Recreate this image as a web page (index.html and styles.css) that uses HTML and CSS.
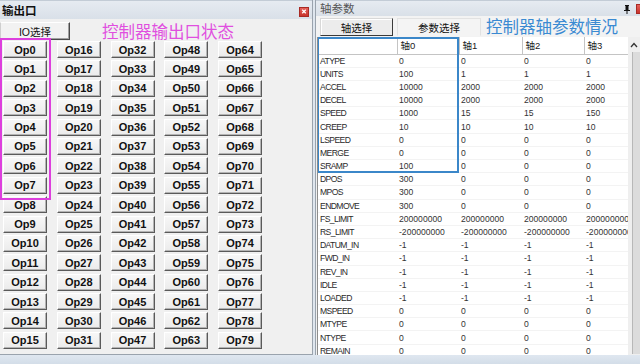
FILE: index.html
```html
<!DOCTYPE html>
<html>
<head>
<meta charset="utf-8">
<link rel="stylesheet" href="styles.css">
</head>
<body>
<div class="app">
  <div class="main">
    <section class="left-panel">
      <div class="title-bar">
        <span class="title-text bold">输出口</span>
        <span class="close-box"><svg width="9" height="9" viewBox="0 0 9 9"><path d="M2.5 2.5 L6.5 6.5 M6.5 2.5 L2.5 6.5" stroke="#fff" stroke-width="1.4"/></svg></span>
      </div>
      <div class="left-body">
        <div class="io-row">
          <button class="io-btn">IO选择</button>
          <span class="pink-note">控制器输出口状态</span>
        </div>
        <div class="op-grid">
          <button class="op">Op0</button><button class="op">Op16</button><button class="op">Op32</button><button class="op">Op48</button><button class="op">Op64</button>
          <button class="op">Op1</button><button class="op">Op17</button><button class="op">Op33</button><button class="op">Op49</button><button class="op">Op65</button>
          <button class="op">Op2</button><button class="op">Op18</button><button class="op">Op34</button><button class="op">Op50</button><button class="op">Op66</button>
          <button class="op">Op3</button><button class="op">Op19</button><button class="op">Op35</button><button class="op">Op51</button><button class="op">Op67</button>
          <button class="op">Op4</button><button class="op">Op20</button><button class="op">Op36</button><button class="op">Op52</button><button class="op">Op68</button>
          <button class="op">Op5</button><button class="op">Op21</button><button class="op">Op37</button><button class="op">Op53</button><button class="op">Op69</button>
          <button class="op">Op6</button><button class="op">Op22</button><button class="op">Op38</button><button class="op">Op54</button><button class="op">Op70</button>
          <button class="op">Op7</button><button class="op">Op23</button><button class="op">Op39</button><button class="op">Op55</button><button class="op">Op71</button>
          <button class="op">Op8</button><button class="op">Op24</button><button class="op">Op40</button><button class="op">Op56</button><button class="op">Op72</button>
          <button class="op">Op9</button><button class="op">Op25</button><button class="op">Op41</button><button class="op">Op57</button><button class="op">Op73</button>
          <button class="op">Op10</button><button class="op">Op26</button><button class="op">Op42</button><button class="op">Op58</button><button class="op">Op74</button>
          <button class="op">Op11</button><button class="op">Op27</button><button class="op">Op43</button><button class="op">Op59</button><button class="op">Op75</button>
          <button class="op">Op12</button><button class="op">Op28</button><button class="op">Op44</button><button class="op">Op60</button><button class="op">Op76</button>
          <button class="op">Op13</button><button class="op">Op29</button><button class="op">Op45</button><button class="op">Op61</button><button class="op">Op77</button>
          <button class="op">Op14</button><button class="op">Op30</button><button class="op">Op46</button><button class="op">Op62</button><button class="op">Op78</button>
          <button class="op">Op15</button><button class="op">Op31</button><button class="op">Op47</button><button class="op">Op63</button><button class="op">Op79</button>
        </div>
        <div class="mark-pink"></div>
      </div>
    </section>
    <div class="splitter"></div>
    <section class="right-panel">
      <div class="title-bar right-title">
        <span class="title-text light">轴参数</span>
        <span class="pin"><svg width="6" height="9" viewBox="0 0 6 9"><path d="M1 0 H5 V1 H4.5 V5 H6 V6 H3.5 V9 H2.5 V6 H0 V5 H1.5 V1 H1 Z" fill="#111"/></svg></span>
        <span class="close-box close-cut"></span>
      </div>
      <div class="toolbar">
        <button class="tb-btn active">轴选择</button>
        <button class="tb-btn flat">参数选择</button>
        <span class="blue-note">控制器轴参数情况</span>
      </div>
      <div class="grid-area">
        <div class="table-wrap">
          <table class="params">
            <colgroup><col class="c-name"><col class="c-v0"><col class="c-v1"><col class="c-v2"><col class="c-v3"></colgroup>
            <thead>
              <tr><th></th><th>轴0</th><th>轴1</th><th>轴2</th><th>轴3</th></tr>
            </thead>
            <tbody>
              <tr><td>ATYPE</td><td>0</td><td>0</td><td>0</td><td>0</td></tr>
              <tr><td>UNITS</td><td>100</td><td>1</td><td>1</td><td>1</td></tr>
              <tr><td>ACCEL</td><td>10000</td><td>2000</td><td>2000</td><td>2000</td></tr>
              <tr><td>DECEL</td><td>10000</td><td>2000</td><td>2000</td><td>2000</td></tr>
              <tr><td>SPEED</td><td>1000</td><td>15</td><td>15</td><td>150</td></tr>
              <tr><td>CREEP</td><td>10</td><td>10</td><td>10</td><td>10</td></tr>
              <tr><td>LSPEED</td><td>0</td><td>0</td><td>0</td><td>0</td></tr>
              <tr><td>MERGE</td><td>0</td><td>0</td><td>0</td><td>0</td></tr>
              <tr><td>SRAMP</td><td>100</td><td>0</td><td>0</td><td>0</td></tr>
              <tr><td>DPOS</td><td>300</td><td>0</td><td>0</td><td>0</td></tr>
              <tr><td>MPOS</td><td>300</td><td>0</td><td>0</td><td>0</td></tr>
              <tr><td>ENDMOVE</td><td>300</td><td>0</td><td>0</td><td>0</td></tr>
              <tr><td>FS_LIMIT</td><td>200000000</td><td>200000000</td><td>200000000</td><td>200000000</td></tr>
              <tr><td>RS_LIMIT</td><td>-200000000</td><td>-200000000</td><td>-200000000</td><td>-200000000</td></tr>
              <tr><td>DATUM_IN</td><td>-1</td><td>-1</td><td>-1</td><td>-1</td></tr>
              <tr><td>FWD_IN</td><td>-1</td><td>-1</td><td>-1</td><td>-1</td></tr>
              <tr><td>REV_IN</td><td>-1</td><td>-1</td><td>-1</td><td>-1</td></tr>
              <tr><td>IDLE</td><td>-1</td><td>-1</td><td>-1</td><td>-1</td></tr>
              <tr><td>LOADED</td><td>-1</td><td>-1</td><td>-1</td><td>-1</td></tr>
              <tr><td>MSPEED</td><td>0</td><td>0</td><td>0</td><td>0</td></tr>
              <tr><td>MTYPE</td><td>0</td><td>0</td><td>0</td><td>0</td></tr>
              <tr><td>NTYPE</td><td>0</td><td>0</td><td>0</td><td>0</td></tr>
              <tr><td>REMAIN</td><td>0</td><td>0</td><td>0</td><td>0</td></tr>
            </tbody>
          </table>
          <div class="mark-blue"></div>
        </div>
        <div class="scrollbar">
          <span class="sb-arrow"><svg width="8" height="6" viewBox="0 0 8 6"><path d="M1 5 L4 1.5 L7 5" fill="none" stroke="#333" stroke-width="1.3"/></svg></span>
          <div class="sb-thumb"></div>
        </div>
      </div>
    </section>
  </div>
  <div class="status-strip"></div>
</div>
</body>
</html>
```
FILE: styles.css
```css
* { box-sizing: border-box; }
html, body { margin: 0; padding: 0; }
body {
  width: 640px;
  height: 364px;
  overflow: hidden;
  background: #dbe3ec;
  font-family: "Liberation Sans", "Noto Sans CJK SC", sans-serif;
}
.app { display: flex; flex-direction: column; height: 364px; }
.main { display: flex; height: 355px; }

/* ---------- left panel ---------- */
.left-panel {
  width: 313px;
  display: flex;
  flex-direction: column;
  background: #f0f0f0;
  border-right: 1px solid #9aa3ad;
  border-bottom: 1px solid #9aa3ad;
}
.title-bar {
  height: 19px;
  display: flex;
  align-items: center;
  background: linear-gradient(#e6ebf1, #d9e0e8);
  border-top: 1px solid #c3ccd6;
  padding-left: 2px;
  flex: none;
}
.title-text { font-size: 11.5px; font-family: "Noto Sans CJK SC", sans-serif; line-height: 1; }
.title-text.bold { font-weight: bold; color: #111; margin-top: 2px; }
.title-text.light { color: #555; }
.close-box {
  margin-left: auto;
  margin-right: 3px;
  width: 10px;
  height: 10px;
  background: linear-gradient(#e4605a, #c8332c);
  border: 1px solid #a82a24;
  display: flex;
  align-items: center;
  justify-content: center;
  margin-top: 3px;
}
.close-box svg { display: block; }
.left-body { position: relative; flex: 1; }
.io-row { display: flex; align-items: center; height: 22px; }
.io-btn {
  margin-top: 2px;
  width: 70px;
  height: 18px;
  padding: 0;
  font-family: "Liberation Sans", "Noto Sans CJK SC", sans-serif;
  font-size: 10.5px;
  color: #111;
  background: #f2f2f2;
  border: 1px solid;
  border-color: #fff #4a4a4a #4a4a4a #cfcfcf;
  box-shadow: inset -1px -1px 0 #a0a0a0;
}
.pink-note {
  margin-left: 32px;
  font-family: "Noto Sans CJK SC", sans-serif;
  font-size: 16.5px;
  color: #e04fdf;
  line-height: 1;
  margin-top: 2px;
}
.op-grid {
  display: grid;
  grid-template-columns: repeat(5, 44px);
  grid-auto-rows: 17px;
  column-gap: 9.75px;
  row-gap: 2.4px;
  padding: 0 0 0 3px;
  margin-top: 0;
}
.op {
  padding: 0;
  font-family: "Liberation Sans", sans-serif;
  font-weight: bold;
  font-size: 11px;
  color: #111;
  background: linear-gradient(#f7f7f7, #ebebeb);
  border: 1px solid;
  border-color: #ffffff #5a5a5a #5a5a5a #ffffff;
  box-shadow: inset -1px -1px 0 #b4b4b4;
}
.mark-pink {
  position: absolute;
  left: 0;
  top: 19px;
  width: 51px;
  height: 162px;
  border: 2px solid #dd3fdd;
  pointer-events: none;
}

.splitter { width: 2px; background: #dfe6ee; }

/* ---------- right panel ---------- */
.right-panel {
  flex: 1;
  display: flex;
  flex-direction: column;
  overflow: hidden;
  border-left: 1px solid #9aa3ad;
  background: #f0f0f0;
}
.right-title { height: 16px; padding-left: 4px; justify-content: flex-start; }
.right-title .title-text { font-size: 11.5px; margin-top: 1px; }
.pin { margin-left: auto; margin-right: 6px; display: flex; margin-top: 1px; }
.close-cut { margin-left: 0; margin-right: -6px; margin-top: 1px; }
.toolbar {
  height: 21px;
  display: flex;
  align-items: center;
  padding-left: 4px;
  background: #f3f3f3;
  flex: none;
}
.tb-btn {
  height: 18px;
  padding: 0;
  font-family: "Noto Sans CJK SC", sans-serif;
  font-size: 10.5px;
  color: #111;
  margin-top: 1px;
}
.tb-btn.active {
  width: 73px;
  background: #ececec;
  border: 1px solid;
  border-color: #d8d8d8 #3a3a3a #3a3a3a #d8d8d8;
  box-shadow: inset 1px 1px 0 #fff;
}
.tb-btn.flat {
  width: 84px;
  margin-left: 4px;
  background: #f4f4f4;
  border: 1px solid #e2e2e2;
  border-bottom-color: #f4f4f4;
}
.blue-note {
  margin-left: 5px;
  font-family: "Noto Sans CJK SC", sans-serif;
  font-size: 16.5px;
  color: #3a8ad2;
  line-height: 1;
}
.grid-area {
  flex: 1;
  display: flex;
  padding-left: 1px;
  border-bottom: 1px solid #9aa3ad;
}
.table-wrap {
  position: relative;
  width: 311px;
  overflow: hidden;
  background: #fff;
  border-left: 1px solid #8d8d8d;
}
.params {
  table-layout: fixed;
  border-collapse: collapse;
  width: 352px;
  font-family: "Liberation Sans", "Noto Sans CJK SC", sans-serif;
  font-size: 8.6px;
  color: #333;
}
.c-name { width: 79px; }
.c-v0 { width: 62px; }
.c-v1 { width: 63px; }
.c-v2 { width: 62px; }
.c-v3 { width: 86px; }
.params th {
  height: 17px;
  font-weight: normal;
  text-align: left;
  padding: 0 0 0 3px;
  font-size: 9.5px;
  color: #222;
  border-left: 1px solid #c4c4c4;
  border-bottom: 1px solid #c4c4c4;
  white-space: nowrap;
  vertical-align: middle;
}
.params th:first-child { border-left: none; }
.params td {
  height: 13.2px;
  padding: 0 0 0 2px;
  line-height: 12px;
  white-space: nowrap;
  overflow: hidden;
  border-bottom: 1px solid #f3f3f3;
}
.params td:first-child { padding-left: 2px; letter-spacing: -0.6px; color: #2a2a2a; }
.mark-blue {
  position: absolute;
  left: -1px;
  top: 0;
  width: 142px;
  height: 136px;
  border: 2px solid #3b87c9;
  pointer-events: none;
}
.scrollbar {
  width: 12px;
  display: flex;
  flex-direction: column;
  align-items: flex-end;
  background: #efefef;
}
.sb-arrow { width: 12px; height: 15px; display: flex; align-items: center; justify-content: center; }
.sb-thumb {
  width: 8px;
  flex: 1;
  margin-bottom: 4px;
  background: #dcdcdc;
  border-left: 1px solid #b8b8b8;
}
.status-strip { flex: 1; background: linear-gradient(#dfe7f0, #d3dde8); }
```
